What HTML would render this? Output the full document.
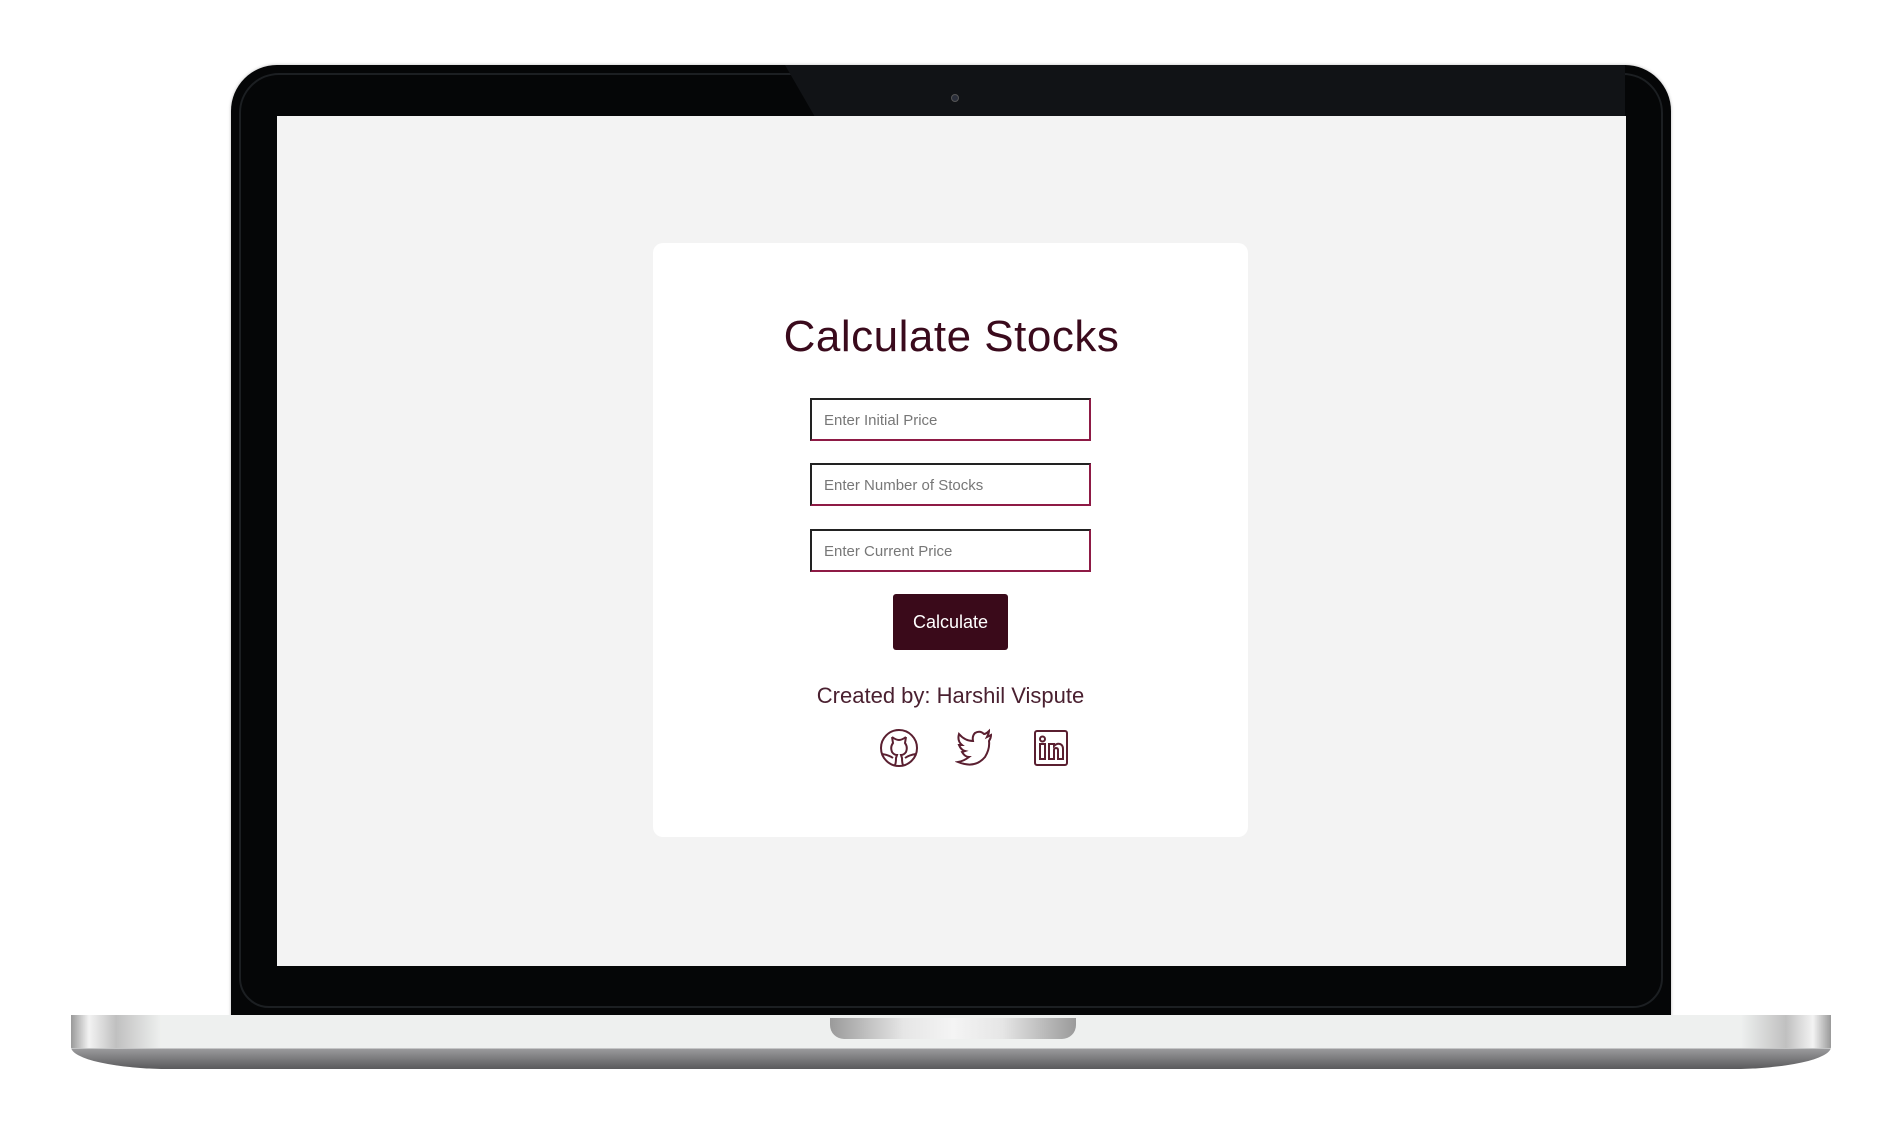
<!DOCTYPE html>
<html><head><meta charset="utf-8"><style>
*{margin:0;padding:0;box-sizing:border-box}
body{width:1895px;height:1139px;background:#fff;position:relative;overflow:hidden;font-family:"Liberation Sans",sans-serif}
.bezel{position:absolute;left:231px;top:65px;width:1440px;height:955px;background:#050607;border-radius:46px 46px 0 0;box-shadow:0 0 3px #bbb;}
.bezel:before{content:"";position:absolute;left:8px;top:8px;right:8px;bottom:12px;border:2px solid #1c1f22;border-radius:40px 40px 30px 30px}
.glare{position:absolute;left:785px;top:65px;width:840px;height:52px;background:#111316;clip-path:polygon(0 0,100% 0,100% 100%,30px 100%)}
.cam{position:absolute;left:951px;top:94px;width:8px;height:8px;border-radius:50%;background:#2a2e3a;border:1px solid #555}
.screen{position:absolute;left:277px;top:116px;width:1349px;height:850px;background:#f3f3f3}
.base{position:absolute;left:71px;top:1015px;width:1770px;height:54px;border-radius:0 0 100px 100px/0 0 22px 22px;background:linear-gradient(#eef0ef 0,#eef0ef 33px,#9a9a9c 34px,#5a5a5c 54px);overflow:hidden;width:1760px}
.base:before{content:"";position:absolute;left:0;top:0;width:90px;height:33px;background:linear-gradient(90deg,#999,#f3f3f3 20%,#c0c0c0 50%,#eef0ef)}
.base:after{content:"";position:absolute;right:0;top:0;width:90px;height:33px;background:linear-gradient(270deg,#999,#f3f3f3 20%,#c0c0c0 50%,#eef0ef)}
.notch{position:absolute;left:830px;top:1018px;width:246px;height:21px;border-radius:0 0 14px 14px;background:linear-gradient(90deg,#9a9a9a,#e6e6e6 30%,#f4f4f4 50%,#e6e6e6 70%,#9a9a9a)}
.card{position:absolute;left:653px;top:243px;width:595px;height:594px;background:#fff;border-radius:10px}
h1{position:absolute;left:4px;width:1895px;top:312px;text-align:center;font-size:44px;font-weight:normal;color:#3a0a1c;letter-spacing:0.5px}
.in{position:absolute;left:810px;width:281px;height:43px;border:2.5px solid #8e1a45;border-top-color:#222;border-left-color:#222;background:#fff;font-size:15px;color:#777;padding:12px 0 0 12px}
.btn{position:absolute;left:893px;top:594px;width:115px;height:56px;background:#3a0a1a;border-radius:3px;color:#fff;font-size:18px;text-align:center;line-height:56px}
.cr{position:absolute;left:3px;width:1895px;top:683px;text-align:center;font-size:22px;color:#4a2030}
svg.ic{position:absolute;top:727px;width:40px;height:42px}
</style></head><body>
<div class="bezel"></div>
<div class="glare"></div>
<div class="cam"></div>
<div class="screen"></div>
<div class="base"></div>
<div class="notch"></div>
<div class="card"></div>
<h1>Calculate Stocks</h1>
<div class="in" style="top:398px">Enter Initial Price</div>
<div class="in" style="top:463px">Enter Number of Stocks</div>
<div class="in" style="top:529px">Enter Current Price</div>
<div class="btn">Calculate</div>
<div class="cr">Created by: Harshil Vispute</div>
<svg class="ic" style="left:879px" viewBox="0 0 40 42" fill="none" stroke="#5a1f30" stroke-width="2"><circle cx="20" cy="21" r="18"/><path d="M13 10 L14 16 Q11 20 13 25 Q15 28 18 28 L17 31 Q17 36 16 38 M27 10 L26 16 Q29 20 27 25 Q25 28 22 28 L23 31 Q23 36 24 38 M13 10 Q17 13 20 13 Q23 13 27 10 M3 27 Q10 28 14 31 M37 27 Q30 28 26 31"/></svg>
<svg class="ic" style="left:955px" viewBox="0 0 40 42" fill="none" stroke="#5a1f30" stroke-width="2"><path d="M36 8 L32 10 Q34 6 34 4 Q31 7 29 7 Q25 3 20 6 Q17 9 18 14 Q10 14 4 7 Q2 14 7 18 L4 18 Q6 23 10 24 L7 25 Q10 30 14 30 Q9 34 3 35 Q20 42 30 30 Q35 22 34 14 Q36 11 36 8Z"/></svg>
<svg class="ic" style="left:1031px" viewBox="0 0 40 42" fill="none" stroke="#5a1f30" stroke-width="2"><rect x="4" y="4" width="32" height="34" rx="2"/><rect x="9" y="17" width="5" height="15"/><circle cx="11.5" cy="12" r="2.5"/><path d="M18 32 V17 H23 V19 Q26 16 29 17 Q32 18 32 22 V32 H27 V23 Q27 21 25 21 Q23 21 23 23 V32 Z"/></svg>
</body></html>
